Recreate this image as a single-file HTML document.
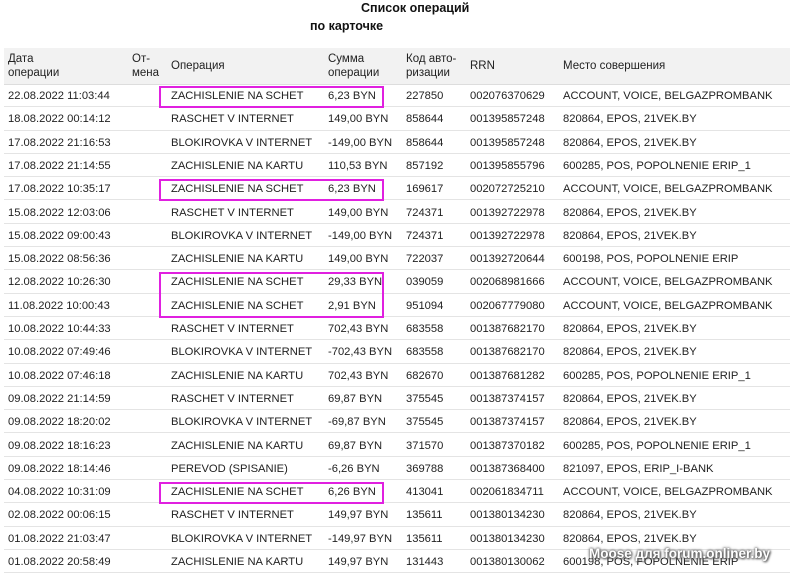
<!DOCTYPE html>
<html><head><meta charset="utf-8"><style>
body{margin:0;width:800px;height:577px;background:#fff;font-family:"Liberation Sans",sans-serif;color:#222;position:relative;overflow:hidden}
.t{position:absolute;font-weight:bold;font-size:12.5px;color:#111}
.hdr{position:absolute;left:4px;top:48px;width:786px;height:36px;background:#f2f2f2;border-bottom:1px solid #ddd}
.hdr div{position:absolute;font-size:11.5px;line-height:14px;top:4px}
.r{position:absolute;left:4px;width:786px;height:23.3px;border-bottom:1px solid #e4e4e4;box-sizing:border-box;font-size:11.2px;line-height:25px}
.r span{position:absolute;white-space:nowrap}
.m{position:absolute;border:2px solid #e020e0;box-sizing:border-box;left:159px;width:225px}
.wm{position:absolute;left:589px;top:546px;font-weight:bold;font-size:13.5px;color:#fff;text-shadow:0 0 2px #555,0 0 3px #666,1px 1px 2px #555}
</style></head><body>
<div class="t" style="left:361px;top:1px">Список операций</div>
<div class="t" style="left:310px;top:19px">по карточке</div>
<div class="hdr">
<div style="left:4px">Дата<br>операции</div>
<div style="left:128px">От-<br>мена</div>
<div style="left:167px;top:11px">Операция</div>
<div style="left:324px">Сумма<br>операции</div>
<div style="left:402px">Код авто-<br>ризации</div>
<div style="left:466px;top:11px">RRN</div>
<div style="left:559px;top:11px">Место совершения</div>
</div>
<div id="rows"></div>
<script>
var d=[
["22.08.2022 11:03:44","ZACHISLENIE NA SCHET","6,23 BYN","227850","002076370629","ACCOUNT, VOICE, BELGAZPROMBANK"],
["18.08.2022 00:14:12","RASCHET V INTERNET","149,00 BYN","858644","001395857248","820864, EPOS, 21VEK.BY"],
["17.08.2022 21:16:53","BLOKIROVKA V INTERNET","-149,00 BYN","858644","001395857248","820864, EPOS, 21VEK.BY"],
["17.08.2022 21:14:55","ZACHISLENIE NA KARTU","110,53 BYN","857192","001395855796","600285, POS, POPOLNENIE ERIP_1"],
["17.08.2022 10:35:17","ZACHISLENIE NA SCHET","6,23 BYN","169617","002072725210","ACCOUNT, VOICE, BELGAZPROMBANK"],
["15.08.2022 12:03:06","RASCHET V INTERNET","149,00 BYN","724371","001392722978","820864, EPOS, 21VEK.BY"],
["15.08.2022 09:00:43","BLOKIROVKA V INTERNET","-149,00 BYN","724371","001392722978","820864, EPOS, 21VEK.BY"],
["15.08.2022 08:56:36","ZACHISLENIE NA KARTU","149,00 BYN","722037","001392720644","600198, POS, POPOLNENIE ERIP"],
["12.08.2022 10:26:30","ZACHISLENIE NA SCHET","29,33 BYN","039059","002068981666","ACCOUNT, VOICE, BELGAZPROMBANK"],
["11.08.2022 10:00:43","ZACHISLENIE NA SCHET","2,91 BYN","951094","002067779080","ACCOUNT, VOICE, BELGAZPROMBANK"],
["10.08.2022 10:44:33","RASCHET V INTERNET","702,43 BYN","683558","001387682170","820864, EPOS, 21VEK.BY"],
["10.08.2022 07:49:46","BLOKIROVKA V INTERNET","-702,43 BYN","683558","001387682170","820864, EPOS, 21VEK.BY"],
["10.08.2022 07:46:18","ZACHISLENIE NA KARTU","702,43 BYN","682670","001387681282","600285, POS, POPOLNENIE ERIP_1"],
["09.08.2022 21:14:59","RASCHET V INTERNET","69,87 BYN","375545","001387374157","820864, EPOS, 21VEK.BY"],
["09.08.2022 18:20:02","BLOKIROVKA V INTERNET","-69,87 BYN","375545","001387374157","820864, EPOS, 21VEK.BY"],
["09.08.2022 18:16:23","ZACHISLENIE NA KARTU","69,87 BYN","371570","001387370182","600285, POS, POPOLNENIE ERIP_1"],
["09.08.2022 18:14:46","PEREVOD (SPISANIE)","-6,26 BYN","369788","001387368400","821097, EPOS, ERIP_I-BANK"],
["04.08.2022 10:31:09","ZACHISLENIE NA SCHET","6,26 BYN","413041","002061834711","ACCOUNT, VOICE, BELGAZPROMBANK"],
["02.08.2022 00:06:15","RASCHET V INTERNET","149,97 BYN","135611","001380134230","820864, EPOS, 21VEK.BY"],
["01.08.2022 21:03:47","BLOKIROVKA V INTERNET","-149,97 BYN","135611","001380134230","820864, EPOS, 21VEK.BY"],
["01.08.2022 20:58:49","ZACHISLENIE NA KARTU","149,97 BYN","131443","001380130062","600198, POS, POPOLNENIE ERIP"]];
var x=[4,167,324,402,466,559],h="";
d.forEach(function(r,i){h+='<div class="r" style="top:'+(84+i*23.3)+'px">';r.forEach(function(c,j){h+='<span style="left:'+x[j]+'px">'+c+'</span>'});h+='</div>'});
[[0,1],[4,1],[8,2],[17,1]].forEach(function(b){h+='<div class="m" style="top:'+(86+b[0]*23.3)+'px;height:'+(b[1]*23.3-1)+'px"></div>'});
document.getElementById('rows').innerHTML=h;
</script>
<div class="wm">Moose для forum.onliner.by</div>
</body></html>
